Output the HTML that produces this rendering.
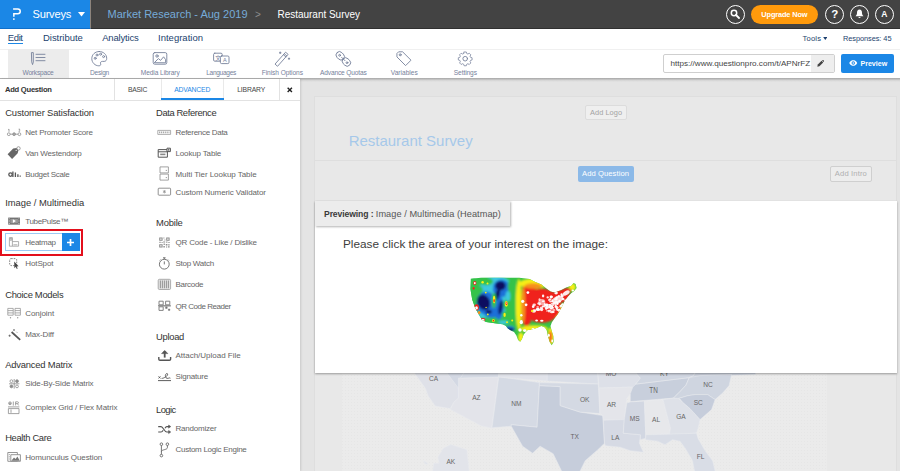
<!DOCTYPE html>
<html lang="en">
<head>
<meta charset="utf-8">
<title>Restaurant Survey - Workspace</title>
<style>
*{box-sizing:border-box;margin:0;padding:0}
html,body{width:900px;height:471px;overflow:hidden;background:#e4e4e4;font-family:"Liberation Sans",sans-serif;color:#333}
body{position:relative}
.abs,.t,svg.ic{position:absolute}
.t{display:block;line-height:1;white-space:nowrap;font-weight:normal;text-decoration:none}
h1.t,h2.t,h3.t{font-weight:normal}
#hdr{left:0;top:0;width:900px;height:29px;background:#434343;border-bottom:1px solid #303030}
#brand{left:0;top:0;width:91px;height:29px;background:#1b87e6;border-right:1px solid #8d847c;border-bottom:1px solid #0f6fca}
.circ{width:19px;height:19px;border:1px solid #fff;border-radius:50%;top:4.5px}
#upg{left:751px;top:5px;width:67px;height:19px;border-radius:10px;background:#ff9a0c}
#menu{left:0;top:29px;width:900px;height:20px;background:#fff}
#tools{left:0;top:48.5px;width:900px;height:29.5px;background:#fff;border-top:1px solid #f0f0f0}
#tshadow{left:0;top:78px;width:900px;height:4px;background:linear-gradient(rgba(120,120,120,.55) 0,rgba(120,120,120,.42) 25%,rgba(130,130,130,.16) 55%,rgba(130,130,130,0) 100%)}
#wsel{left:8px;top:49px;width:60.5px;height:28.5px;background:#ececec}
#urlbox{left:663px;top:54px;width:172px;height:18.5px;background:#fff;border:1px solid #cfcfcf;border-radius:2px}
#urlbtn{left:811px;top:55px;width:23px;height:16.5px;background:#eee}
#prev{left:841px;top:54px;width:53px;height:18.5px;background:#1b87e6;border-radius:2px}
#panel{left:0;top:79px;width:300px;height:392px;background:#fff;box-shadow:1px 0 2px rgba(0,0,0,.12)}
#phead{left:0;top:79px;width:300px;height:21.5px;border-bottom:1px solid #e2e2e2}
.vdiv{top:79px;width:1px;height:21px;background:#e2e2e2}
#tabul{left:161px;top:97.7px;width:62.5px;height:2.3px;background:#1b87e6}
#card{left:314px;top:96px;width:583px;height:380px;background:#e8e8e8;border:1px solid #dedede}
#cdiv{left:315px;top:160px;width:582px;height:1px;background:#dedede}
.btn{border-radius:2px}
#pv{left:315px;top:201px;width:582px;height:172px;background:#fff;box-shadow:0 1px 2px rgba(0,0,0,.35)}
#pvlab{left:315px;top:201px;width:194.5px;height:24.7px;background:#ececec;box-shadow:1px 1px 2px rgba(0,0,0,.3)}
#redbox{left:0;top:229px;width:83px;height:27px;border:2px solid #e30f1c}
#hmitem{left:4.8px;top:233px;width:75px;height:18px;border:1px solid #9ccaf4;background:#fff}
#hmplus{left:62px;top:233px;width:17.8px;height:18px;background:#1b87e6}
</style>
</head>
<body>

<!-- top bar -->
<header id="hdr" class="abs"></header>
<div id="brand" class="abs">
<svg class="ic" style="left:10px;top:6px" width="14" height="16" viewBox="10 6 14 16"><path d="M13.1 8.9H17.8A2.45 2.45 0 0 1 17.8 13.8H13.85V16.7" fill="none" stroke="#fff" stroke-width="1.5"/><rect x="13.1" y="18.3" width="1.5" height="1.6" fill="#fff"/></svg>
<span class="t" style="left:32.5px;top:8.60px;font-size:11.1px;letter-spacing:-0.213px;color:#fff">Surveys</span>
<svg class="ic" style="left:78px;top:12px" width="7" height="5" viewBox="0 0 7 5"><path d="M0 0H7L3.5 4.4Z" fill="#fff"/></svg>
</div>
<span class="t" style="left:107.5px;top:8.69px;font-size:11px;color:#76abd9">Market Research - Aug 2019</span>
<span class="t" style="left:255px;top:9.54px;font-size:10px;color:#8d8d8d">&gt;</span>
<span class="t" style="left:277.5px;top:9.54px;font-size:10px;letter-spacing:-0.021px;color:#fff">Restaurant Survey</span>

<div class="abs circ" style="left:725.5px"></div>
<svg class="ic" style="left:730px;top:9px" width="10" height="10" viewBox="0 0 10 10"><circle cx="4" cy="4" r="2.7" fill="none" stroke="#fff" stroke-width="1.5"/><path d="M6 6L9 9" stroke="#fff" stroke-width="1.8" stroke-linecap="round"/></svg>
<div id="upg" class="abs"></div>
<span class="t" style="left:761.3px;top:11.34px;font-size:7.4px;letter-spacing:-0.134px;color:#fff;font-weight:bold">Upgrade Now</span>
<div class="abs circ" style="left:824.5px"></div>
<span class="t" style="left:831.2px;top:8.57px;font-size:11.5px;color:#fff;font-weight:bold">?</span>
<div class="abs circ" style="left:849.5px"></div>
<svg class="ic" style="left:854.5px;top:9px" width="9" height="10" viewBox="0 0 9 10"><path d="M4.5 0.6C2.7 0.8 2 2.2 2 3.8C2 5.6 1.4 6.4 0.5 7.2H8.5C7.6 6.4 7 5.6 7 3.8C7 2.2 6.3 0.8 4.5 0.6Z" fill="#fff"/><path d="M3.4 8H5.6A1.1 1.1 0 0 1 3.4 8Z" fill="#fff"/></svg>
<div class="abs circ" style="left:874.5px"></div>
<span class="t" style="left:881.2px;top:10.20px;font-size:8.5px;color:#fff;font-weight:bold">A</span>

<!-- menu row -->
<nav id="menu" class="abs"></nav>
<span class="t" style="left:7.8px;top:33.26px;font-size:9.5px;letter-spacing:-0.392px;color:#1c3f6e">Edit</span>
<div class="abs" style="left:7.8px;top:42.6px;width:15.2px;height:1px;background:#1b87e6"></div>
<span class="t" style="left:43px;top:33.26px;font-size:9.5px;letter-spacing:-0.036px;color:#1c3f6e">Distribute</span>
<span class="t" style="left:102.2px;top:33.26px;font-size:9.5px;letter-spacing:-0.189px;color:#1c3f6e">Analytics</span>
<span class="t" style="left:158px;top:33.26px;font-size:9.5px;letter-spacing:0.009px;color:#1c3f6e">Integration</span>
<span class="t" style="left:802.5px;top:35.27px;font-size:7.6px;letter-spacing:0.191px;color:#1c3f6e">Tools</span>
<svg class="ic" style="left:822.8px;top:36.6px" width="4.6" height="3.4" viewBox="0 0 5 4"><path d="M0 0H5L2.5 3.4Z" fill="#1c3f6e"/></svg>
<span class="t" style="left:843px;top:35.44px;font-size:7.4px;letter-spacing:-0.068px;color:#1c3f6e">Responses: 45</span>

<!-- toolbar -->
<div id="tools" class="abs"></div>
<div id="wsel" class="abs"></div>
<span class="t" style="left:22.5px;top:70.41px;font-size:6.6px;letter-spacing:-0.207px;color:#76819b">Workspace</span>
<span class="t" style="left:90px;top:70.41px;font-size:6.6px;letter-spacing:-0.266px;color:#76819b">Design</span>
<span class="t" style="left:140.8px;top:70.41px;font-size:6.6px;letter-spacing:-0.088px;color:#76819b">Media Library</span>
<span class="t" style="left:206.2px;top:70.41px;font-size:6.6px;letter-spacing:-0.318px;color:#76819b">Languages</span>
<span class="t" style="left:261.7px;top:70.41px;font-size:6.6px;letter-spacing:-0.066px;color:#76819b">Finish Options</span>
<span class="t" style="left:320px;top:70.41px;font-size:6.6px;letter-spacing:-0.159px;color:#76819b">Advance Quotas</span>
<span class="t" style="left:390.8px;top:70.41px;font-size:6.6px;color:#76819b">Variables</span>
<span class="t" style="left:453.8px;top:70.41px;font-size:6.6px;letter-spacing:-0.090px;color:#76819b">Settings</span>
<!--TI0-->
<svg class="ic" style="left:0;top:48px" width="500" height="22" viewBox="0 48 500 22" fill="none" stroke="#76819b" stroke-width="0.9" stroke-linecap="round" stroke-linejoin="round">
<!-- workspace -->
<path d="M31.8 52.6H33.3V62.2L32.55 64.6L31.8 62.2Z"/><path d="M36 54.3H45M36 57.5H45M36 60.7H45"/>
<!-- design palette -->
<path d="M99.3 51.5C94.8 51.5 91.8 54.8 91.8 58.6C91.8 62.6 95 65.8 98.8 65.8C100.4 65.8 101 64.9 100.6 63.8C100.1 62.4 100.9 61.4 102.4 61.4H104.2C105.8 61.4 106.7 60.2 106.7 58.4C106.7 54.4 103.4 51.5 99.3 51.5Z"/>
<circle cx="95.2" cy="58.3" r="1"/><circle cx="97" cy="55" r="1"/><circle cx="100.6" cy="54.2" r="1"/><circle cx="103.6" cy="56.6" r="1"/>
<!-- media library -->
<rect x="153.2" y="52.6" width="13.6" height="11.6" rx="1.6"/><circle cx="157" cy="56" r="1.2"/><path d="M154.6 62.4L158.4 58.6L160.6 60.4L163.6 56.8L165.6 59.6V62.4Z"/>
<!-- languages -->
<rect x="213.6" y="53.2" width="8.6" height="8" rx="1.2"/><rect x="220.4" y="56" width="8.6" height="7.6" rx="1.2" fill="#fff"/>
<!-- finish options wand -->
<path d="M275.3 63.8L285.6 52.2L288.1 54.4L277.8 66Z"/><path d="M283.4 54.7L285.9 56.9M284.3 53.7L286.8 55.9"/><path d="M280.2 52V53.6M279.4 52.8H281M289 58V59.4M288.3 58.7H289.7"/>
<!-- advance quotas chain -->
<rect x="-3.4" y="-4.5" width="6.8" height="9" rx="3.4" transform="translate(340.2 55.8) rotate(-45)"/><rect x="-3.4" y="-4.5" width="6.8" height="9" rx="3.4" transform="translate(346.4 62) rotate(-45)"/>
<circle cx="339.6" cy="55.3" r="0.9"/><circle cx="347" cy="62.7" r="0.9"/><path d="M341.6 57.3L345 60.7"/>
<!-- variables tag -->
<path d="M397.2 53.2L398.6 51.8H402.6L411 60.2L405.6 65.6L397.2 57.2Z"/><circle cx="400.2" cy="54.8" r="1"/>
<!-- settings gear -->
<path d="M463.8 52.2h2.6l.5 1.8 1.3.6 1.7-.9 1.8 1.8-.9 1.7.6 1.3 1.8.5v2.6l-1.8.5-.6 1.3.9 1.7-1.8 1.8-1.7-.9-1.3.6-.5 1.8h-2.6l-.5-1.8-1.3-.6-1.7.9-1.8-1.8.9-1.7-.6-1.3-1.8-.5v-2.6l1.8-.5.6-1.3-.9-1.7 1.8-1.8 1.7.9 1.3-.6z" transform="translate(465.2 58.7) scale(0.85) translate(-465.1 -60.1)"/><circle cx="465.2" cy="58.7" r="2.3"/>
<text x="215.3" y="59.7" font-family="'Liberation Sans','Noto Sans CJK SC',sans-serif" font-size="5.5" fill="#76819b" stroke="none">文</text>
<text x="222.9" y="62.2" font-family="'Liberation Sans',sans-serif" font-size="5.5" fill="#76819b" stroke="none">A</text>
</svg>
<!--TI1-->
<div id="urlbox" class="abs"></div>
<div id="urlbtn" class="abs"></div>
<span class="t" style="left:670.5px;top:60.14px;font-size:8.1px;letter-spacing:0.007px;color:#444">https://www.questionpro.com/t/APNrFZ</span>
<svg class="ic" style="left:817px;top:59.5px" width="7" height="7" viewBox="0 0 7 7"><path d="M0.3 6.7L0.8 4.6L4.6 0.8L6.2 2.4L2.4 6.2Z" fill="#444"/><path d="M5.1 0.4L5.5 0A0.5 0.5 0 0 1 6.2 0L7 0.8A0.5 0.5 0 0 1 7 1.5L6.6 1.9Z" fill="#444"/></svg>
<div id="prev" class="abs"></div>
<svg class="ic" style="left:849px;top:60px" width="8.5" height="6" viewBox="0 0 17 12"><path d="M0.5 6C3 1.5 6 0.5 8.5 0.5S14 1.5 16.5 6C14 10.5 11 11.5 8.5 11.5S3 10.5 0.5 6Z" fill="#fff"/><circle cx="8.5" cy="6" r="3.4" fill="#1b87e6"/><circle cx="8.5" cy="6" r="1.6" fill="#fff"/></svg>
<span class="t" style="left:860.5px;top:61.19px;font-size:7.1px;letter-spacing:-0.021px;color:#fff;font-weight:bold">Preview</span>
<div id="tshadow" class="abs"></div>

<!-- main canvas -->
<main>
<div id="card" class="abs"></div>
<div id="cdiv" class="abs"></div>
<div class="abs btn" style="left:585px;top:105px;width:42px;height:14.5px;background:#efefef;border:1px solid #dcdcdc"></div>
<span class="t" style="left:590px;top:109.34px;font-size:7.4px;letter-spacing:0.049px;color:#a3a3a3">Add Logo</span>
<h1 class="t" style="left:348.7px;top:133.30px;font-size:15px;letter-spacing:-0.015px;color:#a6c8ea">Restaurant Survey</h1>
<div class="abs btn" style="left:578px;top:165.6px;width:56px;height:16px;background:#8bb9e8"></div>
<span class="t" style="left:582px;top:169.87px;font-size:7.6px;letter-spacing:0.089px;color:#fff">Add Question</span>
<div class="abs btn" style="left:830px;top:166px;width:41.6px;height:15.6px;background:#ededed;border:1px solid #cfcfcf"></div>
<span class="t" style="left:834.8px;top:169.87px;font-size:7.6px;letter-spacing:0.146px;color:#b0b0b0">Add Intro</span>
<!--BM0-->
<svg class="ic" style="left:342px;top:373px" width="485" height="98" viewBox="342 373 485 98">
<defs><pattern id="dots" width="3" height="3" patternUnits="userSpaceOnUse"><rect width="3" height="3" fill="#ebebeb"/><rect width="1" height="1" fill="#e6e6e6"/></pattern></defs>
<rect x="342" y="373" width="485" height="98" fill="url(#dots)"/>
<g stroke="#e9eaee" stroke-width="0.5" stroke-linejoin="round">
<polygon fill="#dfe1e8" points="414.0,372.5 450.3,372.5 458.4,385.1 458.4,398.1 454.1,401.9 450.3,408.6 435.3,406.1 428.3,396.1 425.3,388.1"/>
<polygon fill="#d3d8e3" points="446.6,372.5 465.4,372.5 460.4,385.1 458.4,388.1"/>
<polygon fill="#e3e4ea" points="458.4,378.1 498.4,376.8 491.7,428.2 480.9,425.7 450.3,409.4 454.1,401.9 458.4,398.1"/>
<polygon fill="#d5dae4" points="464.1,372.5 499.2,372.5 498.4,377.1 460.4,378.1"/>
<polygon fill="#d5dae4" points="498.8,376.8 539.4,382.6 537.1,427.2 511.3,424.7 511.3,426.2 492.0,427.7"/>
<polygon fill="#e1e3ea" points="498.8,372.5 547.7,372.5 547.2,381.1 498.8,377.1"/>
<polygon fill="#dadee7" points="547.2,372.5 597.8,372.5 598.3,384.1 547.2,381.1"/>
<polygon fill="#c6cddb" points="539.4,385.6 560.2,386.6 560.2,405.6 580.2,412.1 602.8,415.6 604.5,443.2 597.8,449.7 585.2,460.7 579.0,473.3 562.7,473.3 553.2,453.7 540.1,446.2 532.6,453.2 522.6,446.2 511.3,426.2 511.3,424.7 537.1,427.2"/>
<polygon fill="#d4d9e3" points="539.4,382.6 598.3,384.1 599.8,413.6 580.2,412.1 560.2,405.6 560.2,386.6 539.4,385.6"/>
<polygon fill="#dde0e8" points="597.8,372.5 635.3,372.5 640.4,378.1 635.3,384.6 632.8,387.1 599.0,388.1"/>
<polygon fill="#e4e5ea" points="599.0,388.1 632.8,387.1 630.3,393.6 626.8,398.6 624.3,419.6 603.3,420.2 602.8,415.6 599.8,413.6"/>
<polygon fill="#d6dae4" points="603.3,420.2 624.3,419.6 623.3,433.2 640.4,434.7 639.4,443.2 643.4,452.2 630.3,450.7 620.3,447.2 605.3,445.7 604.5,443.2"/>
<polygon fill="#d2d7e2" points="630.3,401.9 644.4,401.1 645.9,438.2 640.4,439.7 640.4,434.7 623.3,433.2 624.3,419.6 626.8,403.1"/>
<polygon fill="#e7e8eb" points="644.4,401.1 662.9,399.6 670.4,428.2 669.4,433.7 652.9,434.7 653.4,439.7 646.9,439.7 645.9,438.2"/>
<polygon fill="#c8cfdc" points="632.8,387.1 635.9,384.1 689.2,377.6 686.0,385.1 680.5,391.1 673.4,398.1 630.3,401.6 630.3,393.6"/>
<polygon fill="#d0d6e1" points="635.3,372.5 695.5,372.5 693.0,376.1 689.2,377.6 635.9,384.1 640.4,378.1"/>
<polygon fill="#cdd3df" points="695.5,372.5 755.6,372.5 755.6,374.5 725.6,375.6 700.5,379.1 689.2,377.6 693.0,376.1"/>
<polygon fill="#dee1e8" points="663.0,399.6 673.5,398.1 678.8,398.4 682.5,402.1 690.0,408.6 700.1,419.6 698.1,428.2 696.5,433.2 670.5,434.7 669.5,433.7 670.5,428.2"/>
<polygon fill="#cfd5e0" points="673.5,398.1 680.5,391.1 686.0,385.1 689.3,377.6 700.1,375.6 731.6,374.5 729.1,385.6 722.6,393.1 715.1,399.6 707.6,394.6 695.0,394.6 687.5,395.8 678.8,398.4"/>
<polygon fill="#c6cddb" points="678.8,398.4 687.5,395.8 695.0,394.6 707.6,394.6 715.1,399.6 711.6,409.6 700.1,419.6 690.0,408.6 682.5,402.1 680.0,399.1"/>
<polygon fill="#d9dde6" points="652.4,434.7 696.5,433.2 698.1,438.7 705.1,450.7 712.6,460.7 715.6,473.3 695.0,473.3 692.5,460.7 685.5,448.7 680.0,441.2 672.5,439.7 665.0,444.7 657.5,441.2 645.4,439.7 645.9,434.7"/>
<polygon fill="#e2e4ea" points="432.3,473.3 433.8,463.2 439.3,463.2 437.8,457.2 443.3,448.2 450.8,444.5 466.9,449.7 469.4,473.3"/>
<polygon fill="#e2e4ea" points="423.8,460.7 427.8,463.2 426.8,464.8 424.3,463.2"/>
</g>
<g font-family="'Liberation Sans',sans-serif" font-size="6.6" fill="#666" text-anchor="middle">
<text x="433.6" y="381.1">CA</text>
<text x="476.4" y="400.4">AZ</text>
<text x="516.3" y="406.2">NM</text>
<text x="584.7" y="401.7">OK</text>
<text x="611.5" y="406.9">AR</text>
<text x="574.7" y="439.0">TX</text>
<text x="615.3" y="439.7">LA</text>
<text x="634.8" y="421.2">MS</text>
<text x="656.1" y="421.9">AL</text>
<text x="681.0" y="418.9">GA</text>
<text x="653.6" y="393.4" font-size="9" textLength="8.5" lengthAdjust="spacingAndGlyphs">TN</text>
<text x="708.1" y="386.9">NC</text>
<text x="698.3" y="404.7">SC</text>
<text x="700.6" y="458.5">FL</text>
<text x="450.8" y="463.8">AK</text>
<text x="664.5" y="375.6">KY</text><text x="611" y="375.6">MO</text>
</g></svg>
<!--BM1-->
<section id="pv" class="abs"></section>
<div id="pvlab" class="abs"></div>
<span class="t" style="left:324px;top:209.72px;font-size:8.6px;letter-spacing:-0.102px;color:#3a3a3a;font-weight:bold">Previewing :</span>
<span class="t" style="left:375.8px;top:210.21px;font-size:9.2px;letter-spacing:0.053px;color:#555">Image / Multimedia (Heatmap)</span>
<p class="t" style="left:343px;top:239.01px;font-size:11.8px;color:#3d3d3d">Please click the area of your interest on the image:</p>
<!--HM0-->
<svg class="ic" style="left:466px;top:274px" width="116" height="76" viewBox="466 274 116 76">
<defs><clipPath id="usclip"><path d="M470.8 278.7 L480.9 277.7 L503.5 277.7 L519.2 277.7 L529.6 279.0 L534.8 281.8 L541.4 284.6 L546.7 288.8 L550.5 291.6 L554.8 292.6 L560.9 290.2 L566.2 287.4 L571.4 285.7 L573.5 282.9 L575.6 283.9 L576.6 288.1 L574.2 290.9 L571.4 293.0 L567.9 296.5 L564.8 300.6 L562.7 305.2 L560.2 310.0 L557.5 314.6 L554.8 318.0 L551.9 322.2 L550.5 326.0 L551.5 330.2 L553.3 336.1 L553.6 342.1 L551.7 345.2 L549.6 341.7 L547.9 336.1 L546.7 330.2 L544.9 327.4 L541.4 326.0 L536.6 328.1 L531.4 329.5 L527.2 330.2 L523.7 334.4 L522.0 338.9 L520.2 341.7 L518.1 340.0 L516.4 335.4 L514.0 332.0 L510.5 330.2 L507.9 328.5 L505.6 325.7 L502.6 324.3 L494.8 323.3 L489.6 322.6 L486.1 321.9 L481.9 319.8 L478.4 313.9 L475.0 307.6 L472.2 299.6 L470.4 289.1Z"/></clipPath><filter id="hb" x="-20%" y="-20%" width="140%" height="140%"><feGaussianBlur stdDeviation="1.15"/></filter><filter id="hc" x="-20%" y="-20%" width="140%" height="140%"><feGaussianBlur stdDeviation="0.55"/></filter><filter id="eb"><feGaussianBlur stdDeviation="0.35"/></filter></defs>
<g filter="url(#eb)"><g clip-path="url(#usclip)"><rect x="466" y="274" width="116" height="76" fill="#35c24a"/><g filter="url(#hb)">
<ellipse cx="496.5" cy="301.3" rx="20.9" ry="26.1" fill="#3cc8e0"/>
<ellipse cx="512.2" cy="304.8" rx="7.0" ry="22.6" fill="#35c24a"/>
<ellipse cx="473.6" cy="299.6" rx="4.2" ry="22.6" fill="#35c24a"/>
<ellipse cx="494.8" cy="321.5" rx="22.6" ry="4.5" fill="#35c24a"/>
<ellipse cx="486.1" cy="281.5" rx="7.0" ry="3.8" fill="#35c24a"/>
<ellipse cx="479.1" cy="290.9" rx="3.8" ry="5.2" fill="#35c24a"/>
<ellipse cx="501.4" cy="288.3" rx="8.7" ry="8.7" fill="#1f6fd8"/>
<ellipse cx="498.6" cy="307.4" rx="5.2" ry="12.2" fill="#1f6fd8"/>
<ellipse cx="486.1" cy="303.1" rx="9.7" ry="11.5" fill="#1f6fd8"/>
<ellipse cx="509.6" cy="328.8" rx="5.2" ry="2.8" fill="#1f6fd8"/>
<ellipse cx="491.3" cy="313.5" rx="7.0" ry="4.4" fill="#1f6fd8"/>
<ellipse cx="483.5" cy="302.2" rx="6.3" ry="8.0" fill="#0a1060" transform="rotate(-25 483.5 302.2)"/>
<ellipse cx="500.4" cy="285.7" rx="5.2" ry="4.5" fill="#0a1060"/>
<ellipse cx="497.6" cy="294.4" rx="2.1" ry="6.3" fill="#0a1060" transform="rotate(15 497.6 294.4)"/>
<ellipse cx="500.7" cy="307.4" rx="2.1" ry="7.3" fill="#0a1060" opacity="0.9" transform="rotate(10 500.7 307.4)"/>
<ellipse cx="510.1" cy="329.5" rx="3.5" ry="1.6" fill="#0a1060"/>
<ellipse cx="488.7" cy="311.8" rx="3.1" ry="2.1" fill="#0a1060" opacity="0.9"/>
<ellipse cx="493.9" cy="300.5" rx="2.3" ry="7.7" fill="#35c24a"/>
<ellipse cx="506.3" cy="304.8" rx="2.8" ry="5.2" fill="#35c24a"/>
<ellipse cx="504.6" cy="315.2" rx="2.6" ry="3.8" fill="#35c24a"/>
<ellipse cx="511.5" cy="286.5" rx="3.8" ry="7.3" fill="#35c24a"/>
<ellipse cx="489.6" cy="287.4" rx="3.8" ry="2.4" fill="#3cc8e0"/>
<ellipse cx="507.9" cy="296.1" rx="2.4" ry="5.2" fill="#3cc8e0"/>
<ellipse cx="503.5" cy="322.2" rx="5.2" ry="1.7" fill="#3cc8e0"/>
<ellipse cx="518.8" cy="304.8" rx="3.0" ry="26.1" fill="#f6ee18"/>
<ellipse cx="533.1" cy="283.6" rx="13.9" ry="5.2" fill="#f6ee18"/>
<ellipse cx="534.0" cy="328.8" rx="13.9" ry="3.5" fill="#f6ee18"/>
<ellipse cx="520.9" cy="337.5" rx="2.8" ry="4.9" fill="#f6ee18"/>
<ellipse cx="550.8" cy="336.1" rx="3.5" ry="8.7" fill="#f6ee18"/>
<ellipse cx="572.3" cy="287.1" rx="3.5" ry="3.8" fill="#f6ee18"/>
<ellipse cx="560.6" cy="313.5" rx="4.9" ry="8.7" fill="#f6ee18"/>
<ellipse cx="541.8" cy="305.7" rx="19.5" ry="17.1" fill="#f0221c"/>
<ellipse cx="560.9" cy="296.1" rx="8.7" ry="6.6" fill="#f0221c"/>
<ellipse cx="529.6" cy="296.1" rx="7.3" ry="12.2" fill="#f0221c"/>
<ellipse cx="526.5" cy="317.3" rx="4.9" ry="8.7" fill="#f0221c"/>
<ellipse cx="550.5" cy="337.0" rx="1.4" ry="5.9" fill="#f0221c"/>
<ellipse cx="533.1" cy="286.0" rx="8.7" ry="2.8" fill="#f6901c"/>
<ellipse cx="523.3" cy="304.8" rx="2.1" ry="19.1" fill="#f6901c"/>
<ellipse cx="566.5" cy="290.9" rx="4.5" ry="2.8" fill="#f0221c"/>
</g><g filter="url(#hc)">
<ellipse cx="547.1" cy="308.1" rx="1.5" ry="0.8" fill="#fff" opacity="0.8839705010766723"/>
<ellipse cx="547.5" cy="306.4" rx="1.4" ry="0.7" fill="#fff" opacity="0.8584114209155964"/>
<ellipse cx="553.4" cy="304.7" rx="1.3" ry="1.4" fill="#fff" opacity="0.7809504902874114"/>
<ellipse cx="551.8" cy="312.0" rx="1.9" ry="1.2" fill="#fff" opacity="0.849170118662695"/>
<ellipse cx="552.4" cy="303.6" rx="1.8" ry="0.9" fill="#fff" opacity="0.7860637708393594"/>
<ellipse cx="556.0" cy="306.7" rx="1.7" ry="0.9" fill="#fff" opacity="0.8954000409156165"/>
<ellipse cx="543.4" cy="301.2" rx="1.4" ry="0.8" fill="#fff" opacity="0.7649002924915582"/>
<ellipse cx="553.4" cy="311.9" rx="1.3" ry="1.0" fill="#fff" opacity="0.8963904658769097"/>
<ellipse cx="541.5" cy="307.8" rx="1.7" ry="1.3" fill="#fff" opacity="0.8110241276805382"/>
<ellipse cx="539.1" cy="303.5" rx="1.8" ry="1.3" fill="#fff" opacity="0.8219844412225467"/>
<ellipse cx="554.4" cy="303.0" rx="1.3" ry="1.4" fill="#fff" opacity="0.7879961336651262"/>
<ellipse cx="547.1" cy="305.1" rx="1.6" ry="1.4" fill="#fff" opacity="0.893256485069346"/>
<ellipse cx="555.8" cy="299.3" rx="1.6" ry="1.2" fill="#fff" opacity="0.8949738010706231"/>
<ellipse cx="534.5" cy="310.4" rx="1.9" ry="1.1" fill="#fff" opacity="0.9160380513686686"/>
<ellipse cx="562.7" cy="304.8" rx="1.5" ry="1.6" fill="#fff" opacity="0.9554811966524287"/>
<ellipse cx="547.5" cy="310.9" rx="1.6" ry="0.7" fill="#fff" opacity="0.8654238215749415"/>
<ellipse cx="552.0" cy="306.5" rx="0.9" ry="1.4" fill="#fff" opacity="0.7823350555046711"/>
<ellipse cx="549.8" cy="310.6" rx="1.8" ry="0.8" fill="#fff" opacity="0.8622968502373327"/>
<ellipse cx="534.2" cy="304.8" rx="1.7" ry="1.4" fill="#fff" opacity="0.8196052661284743"/>
<ellipse cx="541.5" cy="309.2" rx="1.8" ry="1.5" fill="#fff" opacity="0.7877302264477772"/>
<ellipse cx="552.9" cy="307.8" rx="1.1" ry="1.1" fill="#fff" opacity="0.8972808759330639"/>
<ellipse cx="549.6" cy="304.9" rx="1.3" ry="1.0" fill="#fff" opacity="0.891585305926598"/>
<ellipse cx="563.0" cy="299.0" rx="1.4" ry="1.2" fill="#fff" opacity="0.9190500206123753"/>
<ellipse cx="565.0" cy="304.4" rx="1.7" ry="1.5" fill="#fff" opacity="0.9494682802991415"/>
<ellipse cx="541.8" cy="310.1" rx="1.0" ry="1.2" fill="#fff" opacity="0.7655619554046719"/>
<ellipse cx="555.8" cy="304.8" rx="1.0" ry="1.0" fill="#fff" opacity="0.7631439009725667"/>
<ellipse cx="555.2" cy="303.2" rx="1.0" ry="1.0" fill="#fff" opacity="0.7563752216665365"/>
<ellipse cx="558.8" cy="296.7" rx="1.0" ry="0.9" fill="#fff" opacity="0.8368473865134254"/>
<ellipse cx="546.4" cy="307.5" rx="1.8" ry="1.6" fill="#fff" opacity="0.8664973647899834"/>
<ellipse cx="545.7" cy="305.6" rx="1.0" ry="1.0" fill="#fff" opacity="0.8161892229292951"/>
<ellipse cx="552.4" cy="300.7" rx="0.9" ry="1.5" fill="#fff" opacity="0.8820643487605312"/>
<ellipse cx="556.9" cy="308.8" rx="0.9" ry="1.2" fill="#fff" opacity="0.9946253106797431"/>
<ellipse cx="558.8" cy="295.9" rx="1.1" ry="1.0" fill="#fff" opacity="0.791760508633584"/>
<ellipse cx="551.3" cy="296.8" rx="1.7" ry="1.0" fill="#fff" opacity="0.8057604182757963"/>
<ellipse cx="556.1" cy="293.1" rx="1.8" ry="1.4" fill="#fff" opacity="0.9545832358313433"/>
<ellipse cx="549.2" cy="300.1" rx="1.4" ry="1.0" fill="#fff" opacity="0.7572450376853413"/>
<ellipse cx="557.6" cy="303.6" rx="1.1" ry="1.3" fill="#fff" opacity="0.9891287690853344"/>
<ellipse cx="533.8" cy="311.3" rx="1.9" ry="1.5" fill="#fff" opacity="0.8411589713404666"/>
<ellipse cx="550.9" cy="308.5" rx="1.1" ry="0.9" fill="#fff" opacity="0.9060165993594546"/>
<ellipse cx="562.3" cy="296.0" rx="1.4" ry="1.3" fill="#fff" opacity="0.9499109362124151"/>
<ellipse cx="561.3" cy="306.2" rx="1.8" ry="1.4" fill="#fff" opacity="0.9375351149576145"/>
<ellipse cx="543.5" cy="306.3" rx="1.7" ry="1.0" fill="#fff" opacity="0.9502058922241727"/>
<ellipse cx="559.5" cy="301.2" rx="1.3" ry="1.5" fill="#fff" opacity="0.9311996664085538"/>
<ellipse cx="552.1" cy="306.7" rx="1.0" ry="1.5" fill="#fff" opacity="0.951625495508049"/>
<ellipse cx="559.1" cy="310.0" rx="1.9" ry="1.3" fill="#fff" opacity="0.8376018780393757"/>
<ellipse cx="544.7" cy="304.6" rx="0.9" ry="1.5" fill="#fff" opacity="0.9124186674184577"/>
<ellipse cx="533.2" cy="306.4" rx="1.3" ry="1.5" fill="#fff" opacity="0.9565388129538053"/>
<ellipse cx="551.5" cy="308.6" rx="1.2" ry="0.9" fill="#fff" opacity="0.8966092920414904"/>
<ellipse cx="549.0" cy="311.0" rx="1.0" ry="1.5" fill="#fff" opacity="0.8384460059883148"/>
<ellipse cx="537.5" cy="309.2" rx="1.8" ry="1.1" fill="#fff" opacity="0.979430271085666"/>
<ellipse cx="537.7" cy="307.0" rx="1.4" ry="0.7" fill="#fff" opacity="0.8600312280962359"/>
<ellipse cx="549.9" cy="304.8" rx="1.7" ry="0.8" fill="#fff" opacity="0.8683732331154891"/>
<ellipse cx="547.7" cy="297.4" rx="1.2" ry="1.1" fill="#fff" opacity="0.8888604687200617"/>
<ellipse cx="550.6" cy="301.5" rx="1.5" ry="0.9" fill="#fff" opacity="0.8192292676161954"/>
<ellipse cx="551.2" cy="297.0" rx="1.5" ry="1.4" fill="#fff" opacity="0.978122009082453"/>
<ellipse cx="537.5" cy="309.9" rx="1.4" ry="1.1" fill="#fff" opacity="0.9231827506370573"/>
<ellipse cx="538.2" cy="309.2" rx="1.4" ry="1.5" fill="#fff" opacity="0.9248044705450714"/>
<ellipse cx="561.6" cy="294.5" rx="1.1" ry="1.2" fill="#fff" opacity="0.9858167585033709"/>
<ellipse cx="552.5" cy="301.1" rx="1.0" ry="1.1" fill="#fff" opacity="0.7681365249141221"/>
<ellipse cx="549.8" cy="306.7" rx="1.6" ry="1.4" fill="#fff" opacity="0.9742566082196917"/>
<ellipse cx="557.7" cy="310.0" rx="1.6" ry="0.8" fill="#fff" opacity="0.9707082084142689"/>
<ellipse cx="556.5" cy="302.1" rx="1.9" ry="1.0" fill="#fff" opacity="0.8718151937477201"/>
<ellipse cx="565.2" cy="300.4" rx="1.0" ry="1.1" fill="#fff" opacity="0.8789012644510897"/>
<ellipse cx="546.2" cy="308.7" rx="1.2" ry="1.3" fill="#fff" opacity="0.7548707320130983"/>
<ellipse cx="539.6" cy="304.5" rx="0.9" ry="1.0" fill="#fff" opacity="0.905981768472966"/>
<ellipse cx="546.3" cy="305.0" rx="1.9" ry="1.4" fill="#fff" opacity="0.9929239896617685"/>
<ellipse cx="555.8" cy="306.1" rx="0.9" ry="1.4" fill="#fff" opacity="0.8176115243803272"/>
<ellipse cx="556.8" cy="307.6" rx="1.8" ry="1.4" fill="#fff" opacity="0.8146522536984604"/>
<ellipse cx="559.4" cy="310.6" rx="1.5" ry="1.3" fill="#fff" opacity="0.7723655519617019"/>
<ellipse cx="562.6" cy="304.6" rx="1.3" ry="0.8" fill="#fff" opacity="0.9845874272600407"/>
<ellipse cx="539.5" cy="299.6" rx="1.0" ry="1.4" fill="#fff" opacity="0.7666556337186153"/>
<ellipse cx="556.7" cy="297.8" rx="1.2" ry="1.2" fill="#fff" opacity="0.9816673210178068"/>
<ellipse cx="549.1" cy="307.7" rx="1.4" ry="0.9" fill="#fff" opacity="0.777362866269821"/>
<ellipse cx="551.2" cy="305.6" rx="1.1" ry="1.0" fill="#fff" opacity="0.8262513494698067"/>
<ellipse cx="550.1" cy="299.2" rx="1.4" ry="0.9" fill="#fff" opacity="0.8367502555319647"/>
<ellipse cx="557.2" cy="303.3" rx="0.9" ry="1.3" fill="#fff" opacity="0.8877622820028134"/>
<ellipse cx="553.8" cy="310.0" rx="1.8" ry="0.8" fill="#fff" opacity="0.9547300350854284"/>
<ellipse cx="539.2" cy="309.7" rx="1.7" ry="1.0" fill="#fff" opacity="0.8766714880387914"/>
<ellipse cx="543.1" cy="296.0" rx="1.2" ry="1.4" fill="#fff" opacity="0.926681350411557"/>
<ellipse cx="543.0" cy="301.2" rx="1.2" ry="0.7" fill="#fff" opacity="0.7824546452877207"/>
<ellipse cx="557.5" cy="299.6" rx="5.9" ry="3.5" fill="#fff" opacity="0.8" transform="rotate(-25 557.5 299.6)"/>
<ellipse cx="566.2" cy="293.0" rx="3.8" ry="2.1" fill="#fff" opacity="0.9" transform="rotate(-30 566.2 293.0)"/>
<ellipse cx="541.8" cy="302.2" rx="3.5" ry="3.1" fill="#fff" opacity="0.6"/>
<ellipse cx="572.8" cy="290.5" rx="1.2" ry="1.0" fill="#fff"/>
<ellipse cx="522.7" cy="301.3" rx="1.6" ry="1.6" fill="#fff"/>
<ellipse cx="526.1" cy="304.8" rx="1.4" ry="1.4" fill="#fff"/>
<ellipse cx="521.3" cy="315.2" rx="1.2" ry="1.2" fill="#fff"/>
<ellipse cx="521.3" cy="322.2" rx="1.6" ry="2.1" fill="#fff"/>
<ellipse cx="520.0" cy="330.0" rx="1.7" ry="1.7" fill="#fff"/>
<ellipse cx="524.7" cy="330.6" rx="1.7" ry="1.4" fill="#fff"/>
<ellipse cx="533.1" cy="329.2" rx="1.6" ry="1.2" fill="#fff"/>
<ellipse cx="548.8" cy="335.3" rx="1.0" ry="1.6" fill="#fff"/>
<ellipse cx="552.2" cy="341.0" rx="0.9" ry="1.4" fill="#fff"/>
<ellipse cx="532.2" cy="310.9" rx="1.2" ry="1.2" fill="#f6ee18"/>
<ellipse cx="536.6" cy="320.5" rx="1.4" ry="1.0" fill="#fff"/>
<ellipse cx="541.8" cy="320.8" rx="1.7" ry="1.0" fill="#fff"/>
<ellipse cx="527.9" cy="292.6" rx="1.4" ry="1.4" fill="#fff"/>
<ellipse cx="474.8" cy="283.1" rx="1.6" ry="2.1" fill="#f0221c"/>
<ellipse cx="474.8" cy="283.1" rx="0.9" ry="1.2" fill="#fff"/>
<ellipse cx="476.5" cy="307.4" rx="2.4" ry="3.1" fill="#f0221c"/>
<ellipse cx="476.5" cy="307.9" rx="1.4" ry="1.7" fill="#fff"/>
<ellipse cx="483.0" cy="319.8" rx="2.4" ry="1.7" fill="#f0221c"/>
<ellipse cx="483.0" cy="319.9" rx="1.6" ry="1.0" fill="#fff"/>
<ellipse cx="473.6" cy="288.3" rx="1.0" ry="1.4" fill="#f0221c"/>
<ellipse cx="482.6" cy="282.2" rx="1.2" ry="1.2" fill="#f6ee18"/>
<ellipse cx="487.5" cy="283.6" rx="1.0" ry="1.0" fill="#f6ee18"/>
<ellipse cx="479.1" cy="312.6" rx="1.4" ry="1.7" fill="#f6901c"/>
<ellipse cx="494.1" cy="299.6" rx="1.2" ry="3.8" fill="#f6ee18"/>
<ellipse cx="494.1" cy="300.6" rx="0.7" ry="1.6" fill="#f0221c"/>
<ellipse cx="506.3" cy="303.9" rx="1.6" ry="2.8" fill="#f6ee18"/>
<ellipse cx="506.5" cy="303.4" rx="0.9" ry="1.6" fill="#f0221c"/>
<ellipse cx="506.5" cy="303.1" rx="0.5" ry="0.7" fill="#fff"/>
<ellipse cx="504.6" cy="314.9" rx="1.2" ry="2.1" fill="#f6ee18"/>
<ellipse cx="493.4" cy="320.5" rx="1.4" ry="1.6" fill="#f6ee18"/>
<ellipse cx="493.4" cy="320.6" rx="0.7" ry="0.9" fill="#f0221c"/>
<ellipse cx="487.8" cy="314.4" rx="0.9" ry="0.9" fill="#f6ee18"/>
<ellipse cx="485.8" cy="292.6" rx="0.9" ry="0.9" fill="#f6ee18"/>
<ellipse cx="486.1" cy="307.4" rx="0.7" ry="0.7" fill="#f6ee18"/>
<ellipse cx="512.2" cy="320.5" rx="1.0" ry="1.0" fill="#f6ee18"/>
<ellipse cx="507.0" cy="322.2" rx="1.0" ry="0.9" fill="#f6ee18"/>
</g></g></g>
</svg>
<!--HM1-->
</main>

<!-- left panel -->
<aside id="panel" class="abs"></aside>
<div id="phead" class="abs"></div>
<span class="t" style="left:5px;top:85.57px;font-size:7.6px;letter-spacing:-0.253px;color:#333;font-weight:bold">Add Question</span>
<div class="abs vdiv" style="left:114px"></div>
<span class="t" style="left:128px;top:87.14px;font-size:6.8px;letter-spacing:-0.252px;color:#444">BASIC</span>
<span class="t" style="left:174.2px;top:87.14px;font-size:6.8px;letter-spacing:-0.152px;color:#1b87e6">ADVANCED</span>
<div class="abs vdiv" style="left:160.5px;background:#e9e9e9"></div>
<div class="abs vdiv" style="left:223px;background:#e9e9e9"></div>
<div id="tabul" class="abs"></div>
<span class="t" style="left:237.2px;top:87.14px;font-size:6.8px;letter-spacing:-0.161px;color:#444">LIBRARY</span>
<div class="abs vdiv" style="left:279px"></div>
<svg class="ic" style="left:287.2px;top:87px" width="5.6" height="5.6" viewBox="0 0 6 6"><path d="M0.7 0.7L5.3 5.3M5.3 0.7L0.7 5.3" stroke="#222" stroke-width="1.5"/></svg>

<h3 class="t" style="left:5.2px;top:108.14px;font-size:9.4px;letter-spacing:-0.146px;color:#333">Customer Satisfaction</h3>
<span class="t" style="left:25.2px;top:129.03px;font-size:8px;letter-spacing:-0.171px;color:#666">Net Promoter Score</span>
<span class="t" style="left:25.2px;top:149.93px;font-size:8px;letter-spacing:-0.181px;color:#666">Van Westendorp</span>
<span class="t" style="left:25.2px;top:171.03px;font-size:8px;letter-spacing:-0.281px;color:#666">Budget Scale</span>
<h3 class="t" style="left:5.2px;top:197.54px;font-size:9.4px;letter-spacing:-0.006px;color:#333">Image / Multimedia</h3>
<span class="t" style="left:25.2px;top:218.43px;font-size:8px;letter-spacing:-0.328px;color:#666">TubePulse™</span>
<div id="redbox" class="abs"></div>
<div id="hmitem" class="abs"></div>
<div id="hmplus" class="abs"></div>
<svg class="ic" style="left:67.4px;top:238.5px" width="7" height="7" viewBox="0 0 7 7"><path d="M3.5 0V7M0 3.5H7" stroke="#fff" stroke-width="1.7"/></svg>
<span class="t" style="left:25.3px;top:239.23px;font-size:8px;letter-spacing:-0.295px;color:#666">Heatmap</span>
<span class="t" style="left:25.3px;top:260.23px;font-size:8px;letter-spacing:-0.118px;color:#666">HotSpot</span>
<h3 class="t" style="left:5.2px;top:289.64px;font-size:9.4px;letter-spacing:-0.301px;color:#333">Choice Models</h3>
<span class="t" style="left:25.2px;top:310.23px;font-size:8px;letter-spacing:-0.051px;color:#666">Conjoint</span>
<span class="t" style="left:25.2px;top:331.23px;font-size:8px;letter-spacing:-0.120px;color:#666">Max-Diff</span>
<h3 class="t" style="left:5.2px;top:360.04px;font-size:9.4px;letter-spacing:-0.188px;color:#333">Advanced Matrix</h3>
<span class="t" style="left:25.2px;top:380.43px;font-size:8px;letter-spacing:-0.127px;color:#666">Side-By-Side Matrix</span>
<span class="t" style="left:25.2px;top:403.73px;font-size:8px;letter-spacing:-0.099px;color:#666">Complex Grid / Flex Matrix</span>
<h3 class="t" style="left:5.2px;top:433.04px;font-size:9.4px;letter-spacing:-0.353px;color:#333">Health Care</h3>
<span class="t" style="left:25.2px;top:454.03px;font-size:8px;letter-spacing:-0.095px;color:#666">Homunculus Question</span>

<h3 class="t" style="left:156px;top:108.14px;font-size:9.4px;letter-spacing:-0.390px;color:#333">Data Reference</h3>
<span class="t" style="left:175.5px;top:129.03px;font-size:8px;letter-spacing:-0.287px;color:#666">Reference Data</span>
<span class="t" style="left:175.5px;top:149.93px;font-size:8px;letter-spacing:-0.150px;color:#666">Lookup Table</span>
<span class="t" style="left:175.5px;top:171.03px;font-size:8px;letter-spacing:-0.042px;color:#666">Multi Tier Lookup Table</span>
<span class="t" style="left:175.5px;top:189.23px;font-size:8px;letter-spacing:-0.099px;color:#666">Custom Numeric Validator</span>
<h3 class="t" style="left:156px;top:217.54px;font-size:9.4px;letter-spacing:-0.165px;color:#333">Mobile</h3>
<span class="t" style="left:175.5px;top:239.23px;font-size:8px;letter-spacing:-0.168px;color:#666">QR Code - Like / Dislike</span>
<span class="t" style="left:175.5px;top:260.23px;font-size:8px;letter-spacing:-0.262px;color:#666">Stop Watch</span>
<span class="t" style="left:175.5px;top:281.23px;font-size:8px;letter-spacing:-0.299px;color:#666">Barcode</span>
<span class="t" style="left:175.5px;top:302.83px;font-size:8px;letter-spacing:-0.470px;color:#666">QR Code Reader</span>
<h3 class="t" style="left:156px;top:331.54px;font-size:9.4px;letter-spacing:-0.284px;color:#333">Upload</h3>
<span class="t" style="left:175.5px;top:351.93px;font-size:8px;letter-spacing:-0.010px;color:#666">Attach/Upload File</span>
<span class="t" style="left:175.5px;top:372.83px;font-size:8px;letter-spacing:-0.181px;color:#666">Signature</span>
<h3 class="t" style="left:156px;top:404.74px;font-size:9.4px;letter-spacing:-0.530px;color:#333">Logic</h3>
<span class="t" style="left:175.5px;top:424.63px;font-size:8px;letter-spacing:-0.227px;color:#666">Randomizer</span>
<span class="t" style="left:175.5px;top:446.43px;font-size:8px;letter-spacing:-0.264px;color:#666">Custom Logic Engine</span>
<!--PI0-->
<svg class="ic" style="left:0;top:120px" width="300" height="351" viewBox="0 120 300 351" fill="none" stroke="#8c8c8c" stroke-width="0.9" stroke-linejoin="round">
<!-- NPS -->
<g stroke-width="0.8"><circle cx="8.8" cy="134.2" r="1.4"/><circle cx="14.1" cy="134.2" r="1.4" fill="#aaa"/><circle cx="19.4" cy="134.2" r="1.4"/><path d="M10.2 134.2H12.7M15.5 134.2H18M8.2 129.6L9 129.1V131.8M18.6 129.2H19.9L19.2 130.2C20.2 130.3 20.2 131.7 18.6 131.7"/></g>
<!-- tag -->
<g stroke="none" fill="#666"><path d="M7.6 154.3L13.2 148.5L16.6 147.9L18.4 150.3L17.7 153.2L12.1 159.1Z"/></g><circle cx="18.5" cy="148.4" r="1.7" stroke="#8a8a8a" stroke-width="0.8"/><circle cx="16.2" cy="150.4" r="0.7" fill="#ddd" stroke="none"/>
<!-- budget -->
<g stroke="#555" stroke-width="1.3"><circle cx="10.5" cy="174.6" r="1.7"/><path d="M12.9 171.4V176.9M15.4 172.6V176.9M17.9 174.2V176.9M19.6 176.2H20.8"/></g>
<!-- tubepulse film -->
<g stroke="none"><rect x="8.2" y="217.6" width="11.8" height="7" fill="#6a6a6a"/><rect x="10.3" y="218.8" width="7.6" height="4.6" fill="#9a9a9a"/><path d="M12.9 219.3L15.9 221.1L12.9 222.9Z" fill="#fff"/><path d="M8.8 218.4h.9v.9h-.9zM8.8 220.6h.9v.9h-.9zM8.8 222.8h.9v.9h-.9zM18.5 218.4h.9v.9h-.9zM18.5 220.6h.9v.9h-.9zM18.5 222.8h.9v.9h-.9z" fill="#fff"/></g>
<!-- heatmap -->
<g stroke="#9a9a9a" stroke-width="0.8"><path d="M9.4 237.6H12.4V246.2H9.4Z"/><rect x="10" y="238.4" width="1.8" height="1.8"/><path d="M12.4 241.6H18.6V246.2H12.4M13.4 244.8H17.4"/></g>
<!-- hotspot -->
<rect x="9.7" y="258.6" width="7" height="7" rx="1.4" stroke-dasharray="1.6 1" stroke-width="0.9" stroke="#777"/><path d="M14.2 261.6L14.4 268.2L15.8 266.8L16.8 268.9L17.7 268.5L16.7 266.4L18.6 266.2Z" fill="#444" stroke="none"/>
<!-- conjoint -->
<g stroke-width="0.8" stroke="#979797"><rect x="7.8" y="308.4" width="5.4" height="6.8"/><rect x="15" y="308.4" width="5.4" height="6.8"/><path d="M7.8 310.6H13.2M7.8 312.9H13.2M15 310.6H20.4M15 312.9H20.4"/></g><circle cx="10.5" cy="317.7" r="0.7" fill="#999" stroke="none"/><circle cx="17.7" cy="317.7" r="0.7" fill="#999" stroke="none"/>
<!-- max-diff wand -->
<g stroke="#555"><path d="M11.6 332L20.2 339.8" stroke-width="1.7"/><path d="M9.6 334.6V336.8M8.5 335.7H10.7M14 329.2V330.8M13.2 330H14.8M16.4 331.8L17.2 332.6" stroke-width="0.7"/></g>
<!-- side by side -->
<g stroke-width="0.8"><path d="M14.2 379V388.6M9 383.8H19.4"/><circle cx="11.4" cy="381.2" r="1.4"/><circle cx="17" cy="381.2" r="1.4" fill="#8c8c8c"/><circle cx="11.4" cy="386.4" r="1.4" fill="#8c8c8c"/><circle cx="17" cy="386.4" r="1.4"/></g>
<!-- complex grid -->
<g stroke-width="0.8"><circle cx="10" cy="403.3" r="1.4"/><circle cx="10" cy="403.3" r="0.5" fill="#8c8c8c"/><path d="M13.3 401.5V405.6M15.6 405.4V401.8H17.6C18.8 401.8 18.8 403.6 17.6 403.6H15.6M17.4 403.6L18.6 405.4M8 406.9H19.4"/><rect x="8.4" y="408.6" width="10.6" height="5"/><path d="M11 409.4V412.8"/></g>
<!-- homunculus -->
<g stroke="#8a8a8a"><rect x="7.8" y="452.5" width="9.6" height="8.8"/><rect x="10.8" y="454.7" width="9.6" height="6.6" fill="#fff"/><path d="M11.4 460.8L14 457.4L15.6 459L17.4 456.6L19.8 460.8Z" fill="#777" stroke="none"/><path d="M8.8 454.6H10M8.8 456.8H10M8.8 459H10" stroke-width="0.7"/></g>

<!-- reference data -->
<rect x="157.8" y="130.4" width="12.8" height="4" stroke-width="0.7"/><path d="M159 132.4H169.4" stroke-width="1.6" stroke-dasharray="1.2 0.7" stroke="#aaa"/>
<!-- lookup table -->
<g stroke="#555" stroke-width="1"><rect x="158.2" y="149.6" width="9.2" height="7.6" fill="#fff"/><path d="M158.2 151.8H167.4"/><rect x="160.2" y="153.6" width="5.2" height="1.6" fill="#888" stroke="none"/><rect x="167" y="148.2" width="3.4" height="3.4" fill="#fff"/><rect x="168" y="149.2" width="1.4" height="1.4" fill="#555" stroke="none"/></g>
<!-- multi tier -->
<g stroke-width="0.8"><rect x="160" y="166.9" width="8.4" height="6"/><rect x="160" y="174.1" width="8.4" height="6"/><path d="M165.8 170.4H166.8M165.8 177.6H166.8" stroke="#666"/></g>
<!-- custom numeric -->
<rect x="158.2" y="188.2" width="12.4" height="7" rx="0.8" stroke="#777" stroke-width="0.8"/><path d="M164.4 190V193.4M162.9 190.8L165.9 192.6M165.9 190.8L162.9 192.6" stroke-width="0.7"/>
<!-- QR -->
<g stroke="none" fill="#8a8a8a"><path d="M159.2 237.4h3.4v3.4h-3.4zM166.2 237.4h3.4v3.4h-3.4zM159.2 244.2h3.4v3.4h-3.4zM163.4 237.6h1v1h-1zM164.4 239.4h1v1.2h-1zM163.2 241.6h2v1h-2zM159.4 241.8h1.2v1.2h-1.2zM161.6 242h1v1h-1zM166.2 241.6h1.2v1.2h-1.2zM168.4 242h1.2v1h-1.2zM163.6 243.6h1.2v1.4h-1.2zM165.8 244h1.6v1.4h-1.6zM168.2 244.2h1.4v1.2h-1.4zM163.4 246h1.4v1.4h-1.4zM166 246.4h1.2v1.2h-1.2zM168 246.2h1.6v1.4h-1.6z"/><path d="M160.2 238.4h1.4v1.4h-1.4zM167.2 238.4h1.4v1.4h-1.4zM160.2 245.2h1.4v1.4h-1.4z" fill="#fff"/></g>
<!-- stopwatch -->
<g stroke="#666"><circle cx="164.3" cy="264.2" r="4.9"/><path d="M164.3 261.4V264.4M163 257.8H165.6M164.3 257.8V259.2M168 259.6L168.8 260.4M160.6 259.6L159.8 260.4" stroke-width="0.9"/></g>
<!-- barcode -->
<rect x="158.2" y="279.3" width="12.4" height="10.2" rx="1.2" stroke="#9a9a9a" stroke-width="0.8" fill="#e4e4e4"/><path d="M160.4 280.6V288.2M162.4 280.6V288.2M164.4 280.6V288.2M166.4 280.6V288.2M168.4 280.6V288.2" stroke="#999" stroke-width="1.1"/>
<!-- QR reader -->
<g stroke="#777" stroke-width="0.9"><rect x="159" y="301.2" width="4.2" height="3.6"/><rect x="165.6" y="301.2" width="4.2" height="3.6"/><rect x="159" y="306.8" width="4.2" height="3.6"/><path d="M165.6 306.8h1.6v1.6h-1.6zM168.4 309h1.4v1.4h-1.4z" fill="#777" stroke-width="0.5"/><path d="M158 305.8H170.8" stroke="#888" stroke-width="1.4"/></g>
<!-- upload -->
<g stroke="#555"><path d="M158.8 357V359.2C158.8 360 159.4 360.3 160 360.3H169.4C170 360.3 170.6 360 170.6 359.2V357" stroke-width="1.4"/><path d="M164.7 351V357.6" stroke-width="1.8"/><path d="M161.6 353.6L164.7 350.4L167.8 353.6Z" fill="#555" stroke-width="0.6"/></g>
<!-- signature -->
<g stroke="#555" stroke-width="0.95"><path d="M158 380.6H171"/><path d="M158.6 376.4L160.4 378.4M160.4 376.4L158.6 378.4"/><path d="M161.6 378.4C164 378.4 167.8 376 167.6 374.2C167.4 372.8 165.6 373.6 165.4 375.4C165.2 377.2 166.4 378.6 167.8 378.4C169 378.2 169.4 377.6 170.4 378.2"/></g>
<!-- randomizer -->
<g stroke="#555" stroke-width="1.2"><path d="M158.2 426.6H161C163.2 426.6 164.4 432 166.8 432H169M158.2 432H161C162 432 162.6 431.2 163.2 430.2M165 428.2C165.6 427.2 166.2 426.6 166.8 426.6H169"/><path d="M168.6 425L170.8 426.6L168.6 428.2ZM168.6 430.4L170.8 432L168.6 433.6Z" fill="#555" stroke-width="0.5"/></g>
<!-- logic engine -->
<g stroke="#666" stroke-width="0.9"><circle cx="161.4" cy="444.2" r="1.3"/><circle cx="167.4" cy="444.2" r="1.3"/><circle cx="161.4" cy="455.6" r="1.3"/><path d="M161.4 445.5V454.3M167.4 445.5V447.6C167.4 450 161.4 449.4 161.4 451.6"/></g>
</svg>
<!--PI1-->
</body>
</html>
